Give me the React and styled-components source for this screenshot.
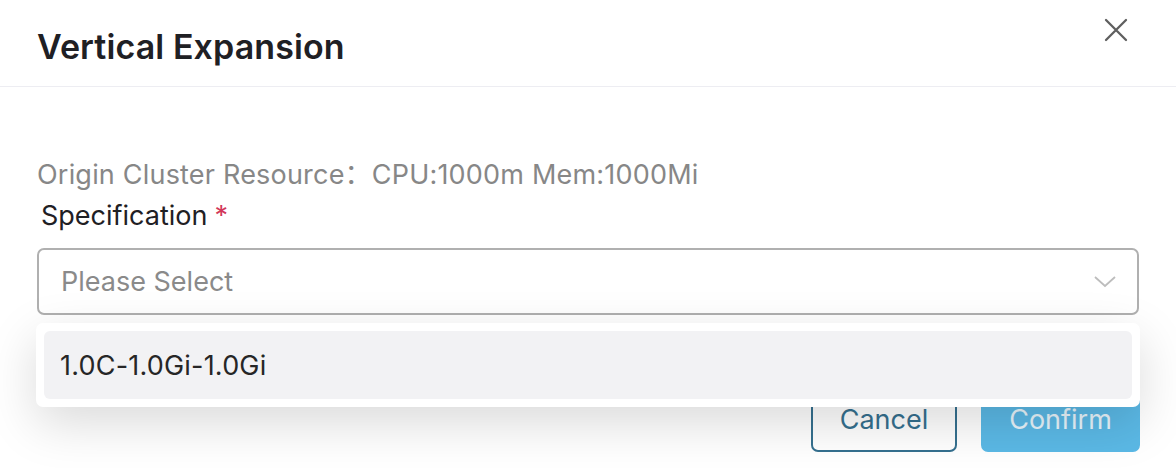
import React from "react";
import styled, { createGlobalStyle } from "styled-components";

const Global = createGlobalStyle`
  html, body { margin: 0; padding: 0; background: #fff; }
  body { font-family: Inter, "Noto Sans", "Liberation Sans", "Noto Sans CJK SC", sans-serif; }
  * { box-sizing: border-box; }
`;

const Modal = styled.div`
  width: 1176px;
  height: 468px;
  background: #fff;
  overflow: hidden;
  display: flex;
  flex-direction: column;
`;

const Header = styled.div`
  height: 87px;
  border-bottom: 1px solid #ededf2;
  display: flex;
  align-items: flex-start;
  justify-content: space-between;
  padding: 0 37px;
`;

const Title = styled.h1`
  margin: 0;
  padding-top: 27px;
  font-size: 34px;
  line-height: 40px;
  font-weight: 600;
  color: #1f2024;
  letter-spacing: 0.1px;
`;

const CloseButton = styled.button`
  margin-top: 17px;
  margin-right: 10px;
  width: 26px;
  height: 26px;
  padding: 0;
  border: none;
  background: transparent;
  display: flex;
  align-items: center;
  justify-content: center;
  cursor: pointer;
`;

const Body = styled.div`
  padding: 68px 37px 0;
  display: flex;
  flex-direction: column;
`;

const InfoLine = styled.div`
  font-size: 27px;
  line-height: 36px;
  color: #878787;
  letter-spacing: 0.2px;
`;

const Colon = styled.span`
  font-family: "Noto Sans CJK SC", sans-serif;
`;

const Label = styled.div`
  margin-left: 4px;
  font-size: 27px;
  line-height: 36px;
  color: #1f2024;
  margin-top: 5px;
`;

const Required = styled.span`
  color: #d2385a;
  margin-left: 7px;
`;

const SelectWrap = styled.div`
  position: relative;
  margin-top: 14px;
`;

const SelectBox = styled.div`
  height: 67px;
  border: 2px solid #b0b0b0;
  border-radius: 7px;
  display: flex;
  align-items: center;
  justify-content: space-between;
  padding: 0 20px 0 22px;
`;

const Placeholder = styled.span`
  font-size: 27px;
  color: #8a8a8a;
`;

const Dropdown = styled.div`
  position: absolute;
  left: -1px;
  right: -1px;
  top: 75px;
  background: #fff;
  border-radius: 7px;
  padding: 8px;
  box-shadow: 0 16px 50px rgba(0, 0, 0, 0.15);
  z-index: 10;
`;

const Option = styled.div`
  height: 68px;
  border-radius: 6px;
  background: ${(p) => (p.$active ? "#f2f2f4" : "transparent")};
  display: flex;
  align-items: center;
  padding-left: 16px;
  font-size: 27px;
  color: #262626;
  letter-spacing: 0.2px;
`;

const Footer = styled.div`
  display: flex;
  justify-content: flex-end;
  gap: 24px;
  padding: 71px 36px 0;
`;

const Button = styled.button`
  height: 66px;
  border-radius: 7px;
  font-family: inherit;
  font-size: 27px;
  padding: 0;
  width: ${(p) => p.$w}px;
  border: 2px solid ${(p) => (p.$primary ? "#5bb9e6" : "#35708f")};
  background: ${(p) => (p.$primary ? "#5bb9e6" : "#fff")};
  color: ${(p) => (p.$primary ? "#e8f5fc" : "#35708f")};
`;

export default function App() {
  return (
    <>
      <Global />
      <Modal>
        <Header>
          <Title>Vertical Expansion</Title>
          <CloseButton aria-label="close">
            <svg width="26" height="26" viewBox="0 0 26 26">
              <path d="M3 3 L23 23 M23 3 L3 23" stroke="#5f5f5f" strokeWidth="2.3" strokeLinecap="round" />
            </svg>
          </CloseButton>
        </Header>
        <Body>
          <InfoLine>
            Origin Cluster Resource<Colon>：</Colon>CPU:1000m Mem:1000Mi
          </InfoLine>
          <Label>
            Specification<Required>*</Required>
          </Label>
          <SelectWrap>
            <SelectBox>
              <Placeholder>Please Select</Placeholder>
              <svg width="24" height="14" viewBox="0 0 24 14">
                <path d="M2 2 L12 11 L22 2" fill="none" stroke="#bdbdbd" strokeWidth="1.8" />
              </svg>
            </SelectBox>
            <Dropdown>
              <Option $active>1.0C-1.0Gi-1.0Gi</Option>
            </Dropdown>
          </SelectWrap>
        </Body>
        <Footer>
          <Button $w={146}>Cancel</Button>
          <Button $w={159} $primary>Confirm</Button>
        </Footer>
      </Modal>
    </>
  );
}
